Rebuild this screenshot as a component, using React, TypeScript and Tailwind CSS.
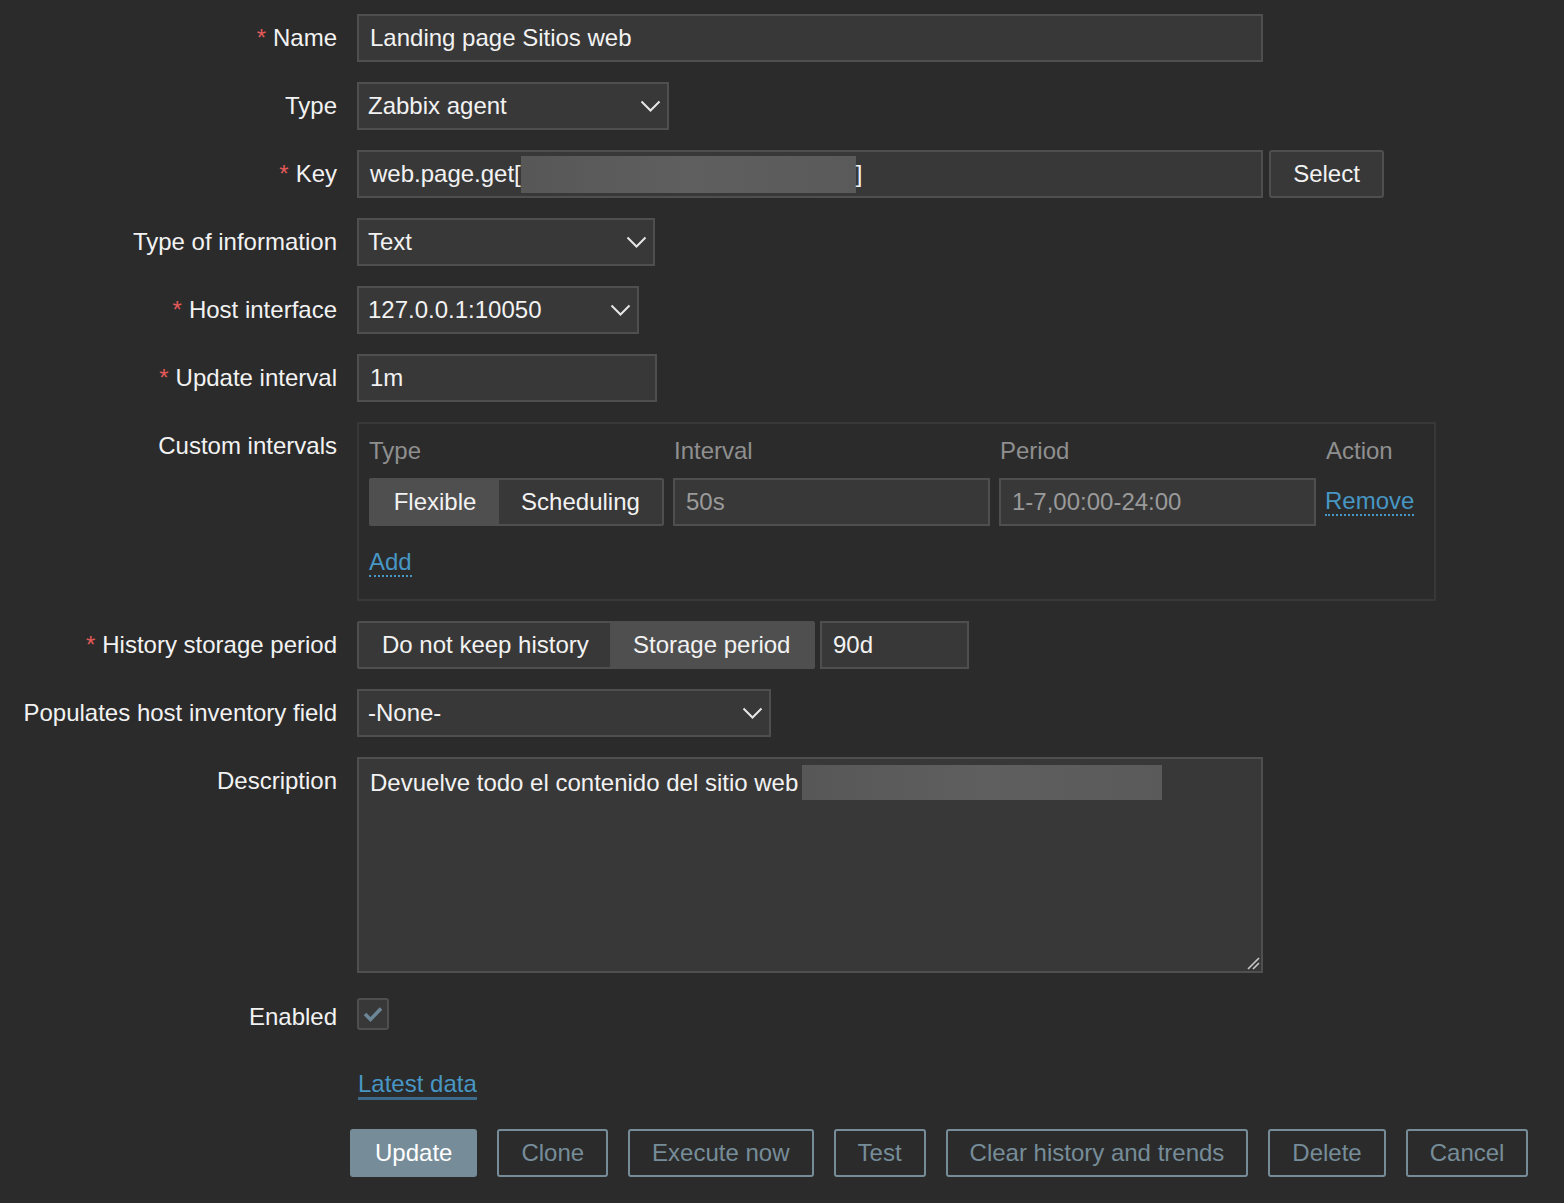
import type { ReactNode } from "react";

// Zabbix item form, dark theme
function Label({ children, required }: { children: ReactNode; required?: boolean }) {
  return (
    <div className="flex h-[48px] items-center justify-end whitespace-nowrap text-[#f2f2f2]">
      {required && <span className="mr-[7px] text-[#e45959]">*</span>}
      {children}
    </div>
  );
}

function Chevron() {
  return (
    <svg width="21" height="12" viewBox="0 0 21 12" className="shrink-0">
      <path d="M1.5 1.5 L10.5 10.5 L19.5 1.5" fill="none" stroke="#e6e6e6" strokeWidth="2" />
    </svg>
  );
}

function Select({ value, width }: { value: string; width: string }) {
  return (
    <div
      className={`flex h-[48px] items-center justify-between border-2 border-[#4f4f4f] bg-[#383838] pl-[9px] pr-[6px] text-[#f2f2f2] ${width}`}
    >
      <span>{value}</span>
      <Chevron />
    </div>
  );
}

function Input({ children, className = "" }: { children: ReactNode; className?: string }) {
  return (
    <div
      className={`flex h-[48px] items-center border-2 border-[#4f4f4f] bg-[#383838] pl-[11px] text-[#f2f2f2] ${className}`}
    >
      {children}
    </div>
  );
}

function Blur({ className }: { className: string }) {
  return (
    <span
      className={`inline-block bg-gradient-to-r from-[#575757] via-[#5f5f5f] to-[#5a5a5a] ${className}`}
    />
  );
}

function OutlineButton({ children }: { children: ReactNode }) {
  return (
    <button className="h-[48px] rounded-[3px] border-2 border-[#768d99] px-[22px] text-[#768d99]">
      {children}
    </button>
  );
}

export default function App() {
  return (
    <div
      className="min-h-screen bg-[#2b2b2b] pt-[14px] text-[24px] leading-[28px]"
      style={{ fontFamily: '"Liberation Sans", Arial, sans-serif' }}
    >
      <div className="grid grid-cols-[337px_1fr] gap-x-[20px] gap-y-[20px]">
        {/* Name */}
        <Label required>Name</Label>
        <Input className="w-[906px]">Landing page Sitios web</Input>

        {/* Type */}
        <Label>Type</Label>
        <Select value="Zabbix agent" width="w-[312px]" />

        {/* Key */}
        <Label required>Key</Label>
        <div className="flex gap-[6px]">
          <Input className="w-[906px]">
            <span>web.page.get[</span>
            <Blur className="h-[37px] w-[335px]" />
            <span>]</span>
          </Input>
          <button className="h-[48px] w-[115px] rounded-[3px] border-2 border-[#4f4f4f] bg-[#383838] text-[#f2f2f2]">
            Select
          </button>
        </div>

        {/* Type of information */}
        <Label>Type of information</Label>
        <Select value="Text" width="w-[298px]" />

        {/* Host interface */}
        <Label required>Host interface</Label>
        <Select value="127.0.0.1:10050" width="w-[282px]" />

        {/* Update interval */}
        <Label required>Update interval</Label>
        <Input className="w-[300px]">1m</Input>

        {/* Custom intervals */}
        <Label>Custom intervals</Label>
        <div className="w-[1079px] border-2 border-[#383838] px-[10px] pb-[13px] pt-[10px]">
          <div className="grid grid-cols-[295px_316px_316px_auto] gap-x-[10px] gap-y-[10px]">
            <div className="flex h-[34px] items-center text-[#8f8f8f]">Type</div>
            <div className="flex h-[34px] items-center text-[#8f8f8f]">Interval</div>
            <div className="flex h-[34px] items-center text-[#8f8f8f]">Period</div>
            <div className="flex h-[34px] items-center text-[#8f8f8f]">Action</div>

            <div className="flex h-[48px] overflow-hidden rounded-[2px] border-2 border-[#4f4f4f] text-[#f2f2f2]">
              <div className="flex w-[128px] items-center justify-center bg-[#4f4f4f]">Flexible</div>
              <div className="flex flex-1 items-center justify-center bg-[#383838]">Scheduling</div>
            </div>
            <Input className="-ml-[1px]">
              <span className="text-[#9a9a9a]">50s</span>
            </Input>
            <Input className="-ml-[1px]">
              <span className="text-[#9a9a9a]">1-7,00:00-24:00</span>
            </Input>
            <div className="-ml-[1px] flex h-[48px] items-center">
              <span className="border-b-2 border-dotted border-[#4796c4] leading-[26px] text-[#4796c4]">
                Remove
              </span>
            </div>
          </div>
          <div className="mt-[14px] flex h-[46px] items-center">
            <span className="border-b-2 border-dotted border-[#4796c4] leading-[26px] text-[#4796c4]">
              Add
            </span>
          </div>
        </div>

        {/* History storage period */}
        <Label required>History storage period</Label>
        <div className="flex gap-[5px]">
          <div className="flex h-[48px] w-[458px] overflow-hidden rounded-[2px] border-2 border-[#4f4f4f] text-[#f2f2f2]">
            <div className="flex w-[251px] items-center bg-[#383838] pl-[23px]">Do not keep history</div>
            <div className="flex flex-1 items-center bg-[#4f4f4f] pl-[23px]">Storage period</div>
          </div>
          <Input className="w-[149px]">90d</Input>
        </div>

        {/* Populates host inventory field */}
        <Label>Populates host inventory field</Label>
        <Select value="-None-" width="w-[414px]" />

        {/* Description */}
        <Label>Description</Label>
        <div className="relative h-[216px] w-[906px] border-2 border-[#4f4f4f] bg-[#383838] px-[11px] pt-[6px] text-[#f2f2f2]">
          <div className="flex items-center">
            <span>Devuelve todo el contenido del sitio web</span>
            <Blur className="ml-[4px] h-[35px] w-[360px]" />
          </div>
          <svg width="14" height="14" viewBox="0 0 14 14" className="absolute bottom-[1px] right-[1px]">
            <path d="M2 13 L13 2 M7 13 L13 7" stroke="#c8c8c8" strokeWidth="1.6" />
          </svg>
        </div>

        {/* Enabled */}
        <Label>Enabled</Label>
        <div className="flex h-[48px] items-start pt-[5px]">
          <div className="flex h-[32px] w-[32px] items-center justify-center rounded-[3px] border-2 border-[#4f4f4f] bg-[#383838]">
            <svg width="22" height="18" viewBox="0 0 22 18">
              <path d="M3 9 L8.5 14.5 L19 3.5" fill="none" stroke="#6b8797" strokeWidth="3.5" />
            </svg>
          </div>
        </div>

        {/* Latest data link */}
        <div />
        <div className="flex h-[48px] items-center">
          <span className="ml-[1px] border-b-[3px] border-[#3d6a8a] leading-[26px] text-[#4796c4]">
            Latest data
          </span>
        </div>

        {/* Buttons */}
        <div />
        <div className="-ml-[7px] flex gap-[20px]">
          <button className="h-[48px] rounded-[3px] border-2 border-[#768d99] bg-[#768d99] px-[23px] text-white">
            Update
          </button>
          <OutlineButton>Clone</OutlineButton>
          <OutlineButton>Execute now</OutlineButton>
          <OutlineButton>Test</OutlineButton>
          <OutlineButton>Clear history and trends</OutlineButton>
          <OutlineButton>Delete</OutlineButton>
          <OutlineButton>Cancel</OutlineButton>
        </div>
      </div>
    </div>
  );
}
